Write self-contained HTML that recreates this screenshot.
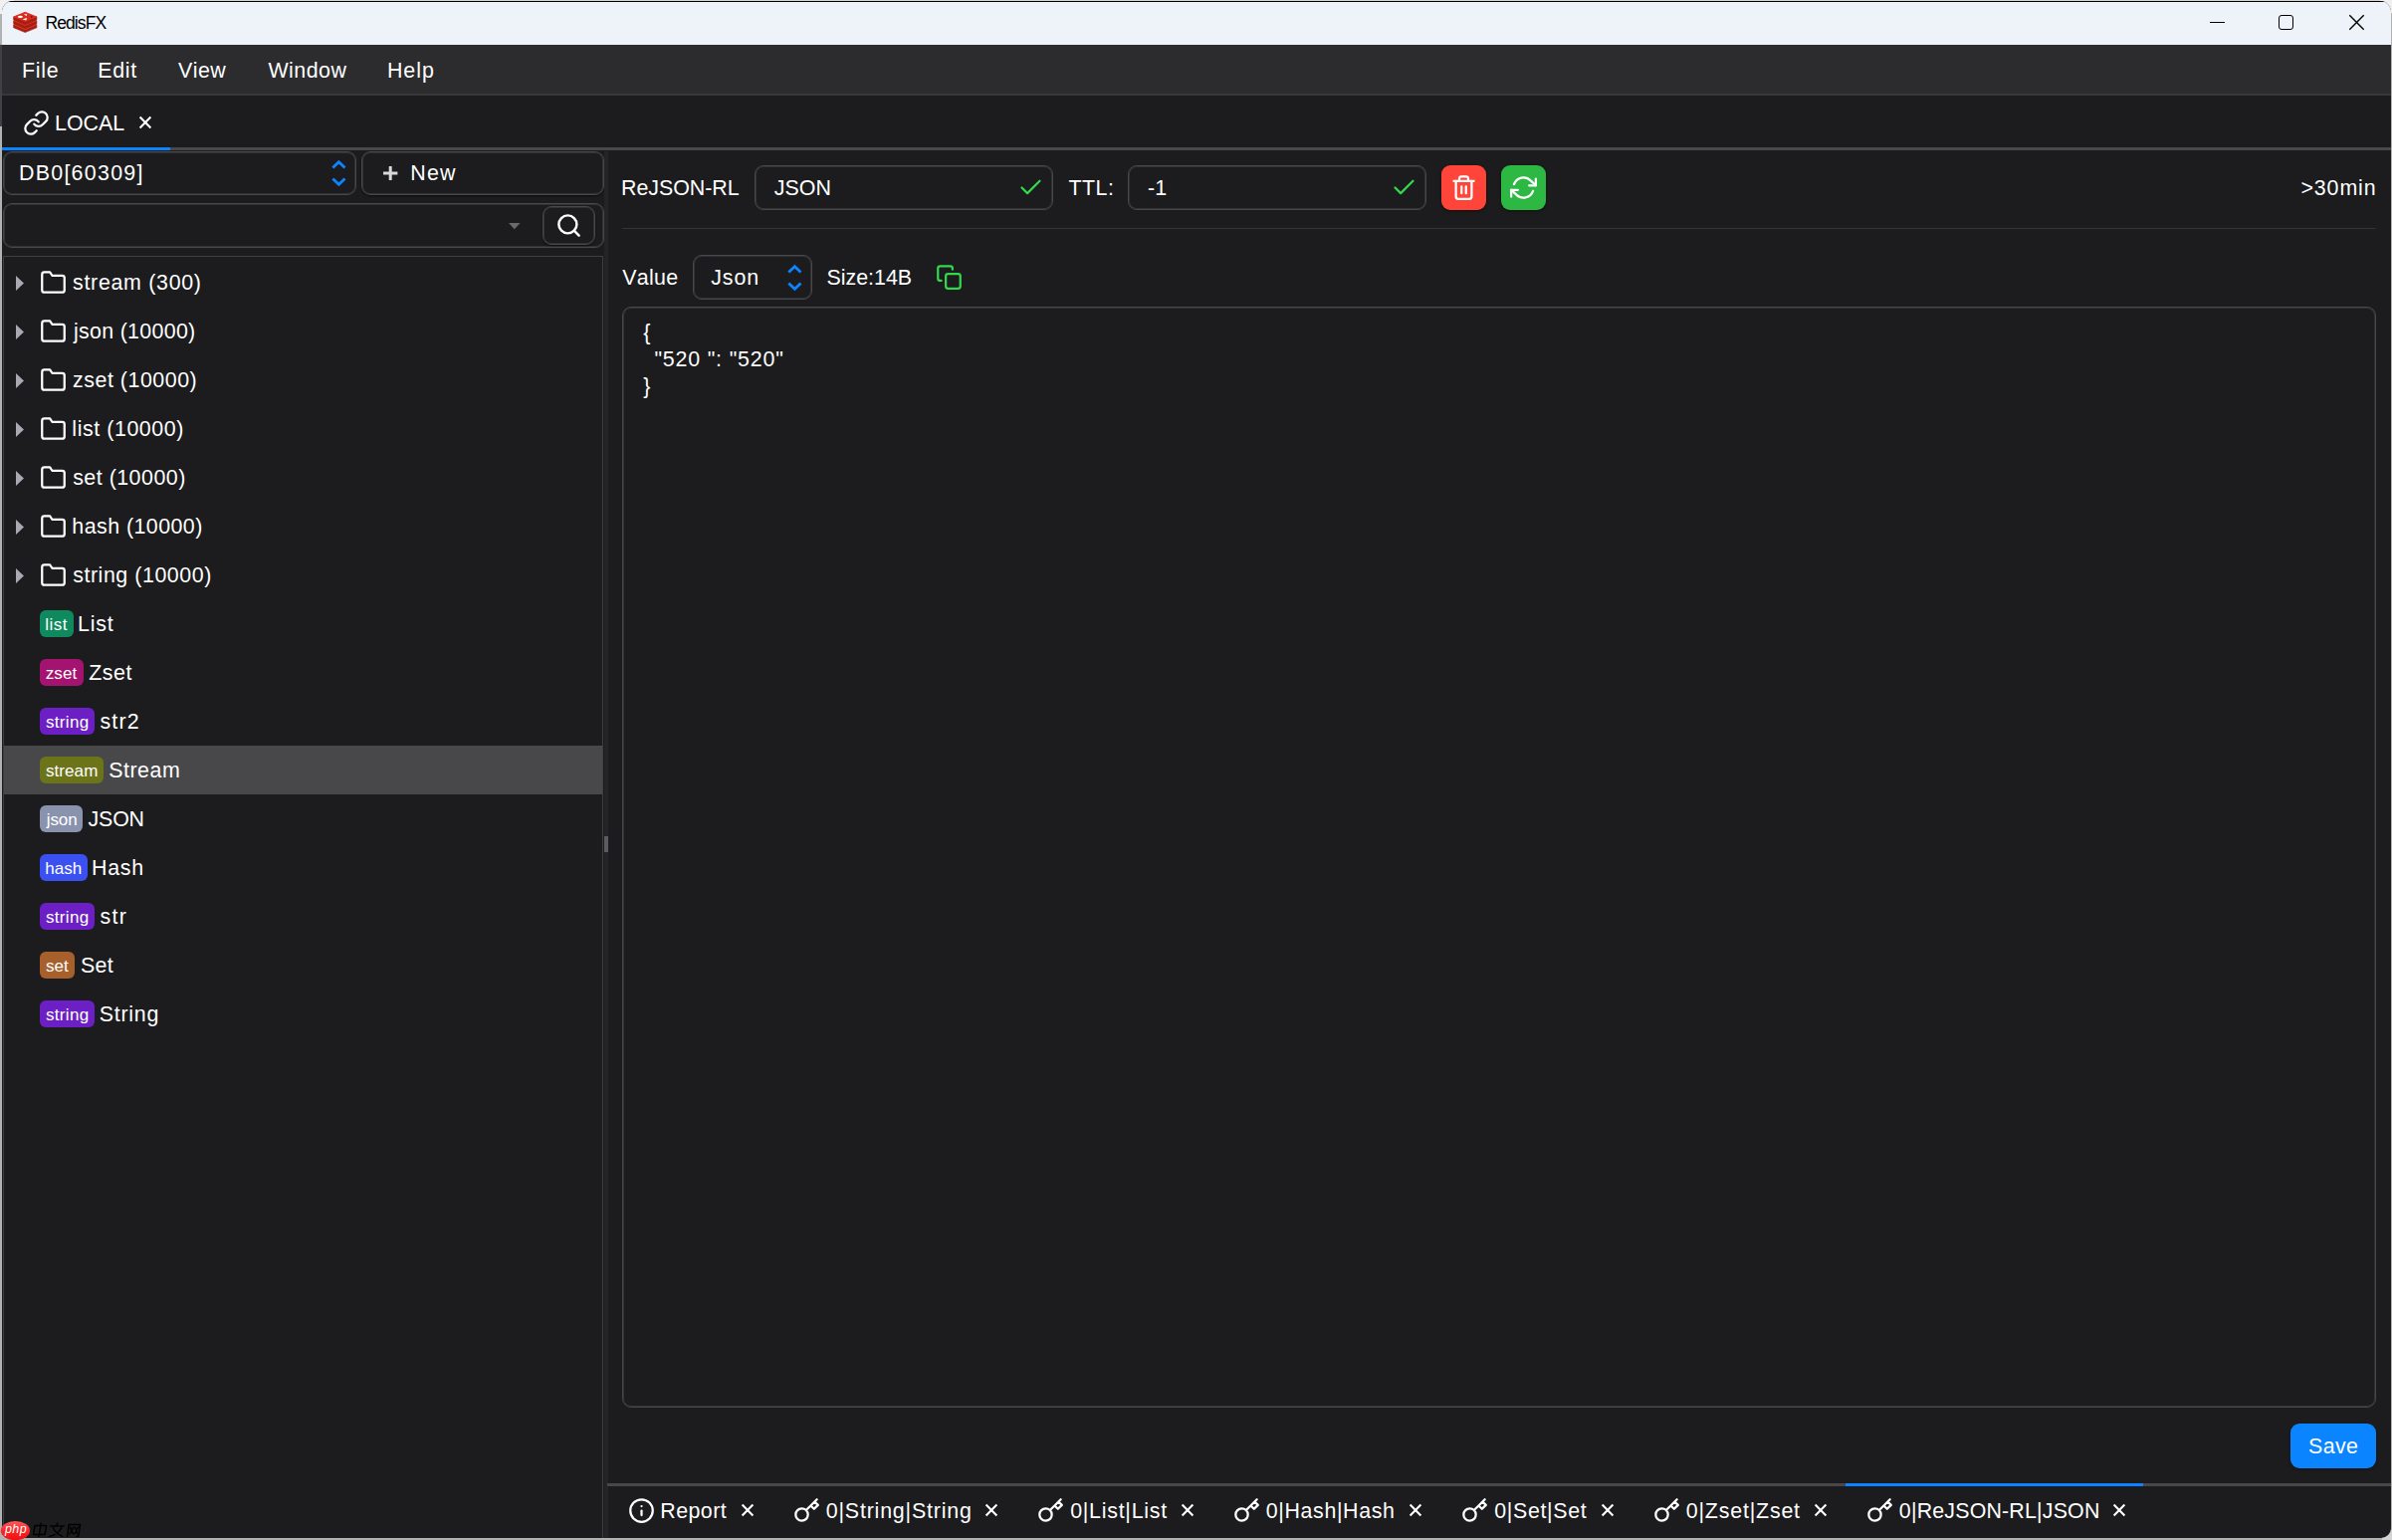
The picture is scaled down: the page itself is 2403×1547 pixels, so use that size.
<!DOCTYPE html>
<html>
<head>
<meta charset="utf-8">
<title>RedisFX</title>
<style>
html,body{margin:0;padding:0;}
body{width:2403px;height:1547px;overflow:hidden;position:relative;background:#b2b2b2;font-family:"Liberation Sans",sans-serif;font-size:22px;line-height:26px;color:#fff;}
.abs{position:absolute;}
#win{position:absolute;left:2px;top:1px;width:2400px;height:1544px;background:#1c1c1e;border-radius:11px 11px 10px 10px;overflow:hidden;}
#c{position:absolute;left:-2px;top:-1px;width:2403px;height:1547px;}
.t{position:absolute;white-space:pre;line-height:26px;height:26px;font-size:21px;font-kerning:none;}
.box{position:absolute;box-sizing:border-box;border:1px solid #48484b;border-radius:9px;background:#1c1c1e;box-shadow:inset 0 0 0 1px rgba(72,72,75,0.5);}
.badge{position:absolute;height:27px;border-radius:6px;font-size:17.5px;line-height:27px;text-align:center;white-space:pre;}
svg{position:absolute;overflow:visible;display:block;}
</style>
</head>
<body>
<div class="abs" style="left:0;top:0;width:2403px;height:1px;background:#d6d6d6;"></div>
<div class="abs" style="left:0;top:0;width:14px;height:14px;background:#f0f0f0;"></div>
<div class="abs" style="left:2391px;top:0;width:12px;height:13px;background:#f0f0f0;"></div>
<div class="abs" style="left:2393px;top:1537px;width:10px;height:10px;background:#d4d4d4;"></div>
<div class="abs" style="left:0;top:45px;width:2px;height:82px;background:#3f4146;"></div>
<div id="win"><div id="c">
<div class="abs" style="left:2px;top:1px;width:2400px;height:1px;background:#000"></div>
<div class="abs" style="left:2px;top:2px;width:2400px;height:43px;background:#eef2f9"></div>
<svg style="left:13px;top:11px" width="25" height="23" viewBox="13 11 25 23">
<g transform="translate(0,8)"><path d="M13.6 16.8L25.25 21.8L36.9 16.8V19.8L25.25 24.6L13.6 19.8Z" fill="#a41e11" stroke="#a41e11" stroke-width="0.6" stroke-linejoin="round"/><path d="M13.9 16.8L25.25 12.2L36.6 16.8L25.25 21.7Z" fill="#d82c20" stroke="#d82c20" stroke-width="0.8" stroke-linejoin="round"/></g><g transform="translate(0,4)"><path d="M13.6 16.8L25.25 21.8L36.9 16.8V19.8L25.25 24.6L13.6 19.8Z" fill="#a41e11" stroke="#a41e11" stroke-width="0.6" stroke-linejoin="round"/><path d="M13.9 16.8L25.25 12.2L36.6 16.8L25.25 21.7Z" fill="#d82c20" stroke="#d82c20" stroke-width="0.8" stroke-linejoin="round"/></g><g><path d="M13.6 16.8L25.25 21.8L36.9 16.8V19.8L25.25 24.6L13.6 19.8Z" fill="#a41e11" stroke="#a41e11" stroke-width="0.6" stroke-linejoin="round"/><path d="M13.9 16.8L25.25 12.2L36.6 16.8L25.25 21.7Z" fill="#d82c20" stroke="#d82c20" stroke-width="0.8" stroke-linejoin="round"/></g>
<ellipse cx="20.4" cy="16.9" rx="2.5" ry="1.1" fill="#fff"/><path d="M23.9 14.2L27.3 14L26.6 16.2Z" fill="#fbe4e2"/><path d="M22.6 19.3L27.1 18.1L26.3 20.6Z" fill="#fff"/><circle cx="31.7" cy="16.8" r="0.9" fill="#7a1109"/>
</svg>
<div class="t" style="left:45.4px;top:12px;font-size:17.5px;color:#000;letter-spacing:-0.9px;line-height:22px;height:22px">RedisFX</div>
<div class="abs" style="left:2220px;top:21.8px;width:15px;height:1.4px;background:#000"></div>
<div class="abs" style="left:2289px;top:15px;width:15px;height:15px;box-sizing:border-box;border:1.5px solid #000;border-radius:3px"></div>
<svg style="left:2360px;top:15px" width="15" height="15" viewBox="0 0 15 15" stroke="#000" stroke-width="1.4"><path d="M0.3 0.3L14.7 14.7M14.7 0.3L0.3 14.7"/></svg>
<div class="abs" style="left:2px;top:45px;width:2400px;height:50px;background:#2c2c2e"></div>
<div class="abs" style="left:2px;top:94px;width:2400px;height:2px;background:#38383a"></div>
<div class="t" style="left:21.94px;top:57.75px;font-size:21.4px;letter-spacing:0.71px;">File</div>
<div class="t" style="left:98.24px;top:57.75px;font-size:21.4px;letter-spacing:0.68px;">Edit</div>
<div class="t" style="left:178.91px;top:57.75px;font-size:21.4px;letter-spacing:0.49px;">View</div>
<div class="t" style="left:269.41px;top:57.75px;font-size:21.4px;letter-spacing:0.49px;">Window</div>
<div class="t" style="left:388.94px;top:57.75px;font-size:21.4px;letter-spacing:0.98px;">Help</div>
<div class="abs" style="left:2px;top:148px;width:2400px;height:3px;background:#48484a"></div>
<div class="abs" style="left:2px;top:148px;width:169px;height:3px;background:#0a84ff"></div>
<svg style="left:22.5px;top:110px" width="27" height="27" viewBox="0 0 24 24" fill="none" stroke="#fff" stroke-width="2" stroke-linecap="round" stroke-linejoin="round" ><path d="M10 13a5 5 0 0 0 7.54.54l3-3a5 5 0 0 0-7.07-7.07l-1.72 1.71"/><path d="M14 11a5 5 0 0 0-7.54-.54l-3 3a5 5 0 0 0 7.07 7.07l1.71-1.71"/></svg>
<div class="t" style="left:55.04px;top:110.95px;font-size:21.4px;letter-spacing:-0.03px;">LOCAL</div>
<svg style="left:140px;top:117px" width="12" height="12" viewBox="0 0 12 12" stroke="#fff" stroke-width="2.1" stroke-linecap="butt"><path d="M0.6 0.6L11.4 11.4M11.4 0.6L0.6 11.4"/></svg>
<div class="box" style="left:3px;top:152px;width:355px;height:44px"></div>
<div class="t" style="left:18.94px;top:160.95px;font-size:21.4px;letter-spacing:1.28px;">DB0[60309]</div>
<svg style="left:332.5px;top:161px" width="15" height="26" viewBox="0 0 15 26" fill="none" stroke="#0a84ff" stroke-width="2.8" stroke-linecap="butt" stroke-linejoin="miter"><path d="M1.3 7.6L7.4 1.7L13.5 7.6"/><path d="M1.3 18.4L7.4 24.3L13.5 18.4"/></svg>
<div class="box" style="left:363px;top:152px;width:244px;height:44px;box-shadow:inset 0 0 0 1px rgba(72,72,75,0.5),0 1px 2px rgba(0,0,0,.6)"></div>
<svg style="left:385px;top:167px" width="14" height="14" viewBox="0 0 14 14" stroke="#d9d9d9" stroke-width="3"><path d="M7.2 0V14M0 7H14.4"/></svg>
<div class="t" style="left:412.24px;top:160.95px;font-size:21.4px;letter-spacing:1.20px;">New</div>
<div class="box" style="left:3px;top:204px;width:604px;height:45px"></div>
<svg style="left:510.5px;top:223.5px" width="12" height="7" viewBox="0 0 12 7"><path d="M0 0H11.6L5.8 6.3Z" fill="#6a6a6c"/></svg>
<div class="box" style="left:545px;top:207px;width:53px;height:39px;box-shadow:inset 0 0 0 1px rgba(72,72,75,0.5),0 1px 2px rgba(0,0,0,.6)"></div>
<svg style="left:558px;top:213px" width="27" height="27" viewBox="0 0 24 24" fill="none" stroke="#fff" stroke-width="2.2" stroke-linecap="round" stroke-linejoin="round" ><circle cx="11" cy="11" r="8"/><line x1="21" y1="21" x2="16.65" y2="16.65"/></svg>
<div class="abs" style="left:3px;top:257px;width:603px;height:1292px;box-sizing:border-box;border:1px solid #3f3f42;"></div>
<svg style="left:16px;top:277.0px" width="8" height="15" viewBox="0 0 8 15"><path d="M0 0L8 7.5L0 15Z" fill="#a9a9b1"/></svg>
<svg style="left:40px;top:269.8px" width="27" height="27" viewBox="0 0 24 24" fill="none" stroke="#fff" stroke-width="2" stroke-linecap="round" stroke-linejoin="round" ><path d="M22 19a2 2 0 0 1-2 2H4a2 2 0 0 1-2-2V5a2 2 0 0 1 2-2h5l2 3h9a2 2 0 0 1 2 2z"/></svg>
<div class="t" style="left:73.10px;top:270.95px;font-size:21.4px;letter-spacing:0.69px;">stream (300)</div>
<svg style="left:16px;top:326.0px" width="8" height="15" viewBox="0 0 8 15"><path d="M0 0L8 7.5L0 15Z" fill="#a9a9b1"/></svg>
<svg style="left:40px;top:318.8px" width="27" height="27" viewBox="0 0 24 24" fill="none" stroke="#fff" stroke-width="2" stroke-linecap="round" stroke-linejoin="round" ><path d="M22 19a2 2 0 0 1-2 2H4a2 2 0 0 1-2-2V5a2 2 0 0 1 2-2h5l2 3h9a2 2 0 0 1 2 2z"/></svg>
<div class="t" style="left:73.92px;top:319.95px;font-size:21.4px;letter-spacing:0.31px;">json (10000)</div>
<svg style="left:16px;top:375.0px" width="8" height="15" viewBox="0 0 8 15"><path d="M0 0L8 7.5L0 15Z" fill="#a9a9b1"/></svg>
<svg style="left:40px;top:367.8px" width="27" height="27" viewBox="0 0 24 24" fill="none" stroke="#fff" stroke-width="2" stroke-linecap="round" stroke-linejoin="round" ><path d="M22 19a2 2 0 0 1-2 2H4a2 2 0 0 1-2-2V5a2 2 0 0 1 2-2h5l2 3h9a2 2 0 0 1 2 2z"/></svg>
<div class="t" style="left:73.03px;top:368.95px;font-size:21.4px;letter-spacing:0.53px;">zset (10000)</div>
<svg style="left:16px;top:424.0px" width="8" height="15" viewBox="0 0 8 15"><path d="M0 0L8 7.5L0 15Z" fill="#a9a9b1"/></svg>
<svg style="left:40px;top:416.8px" width="27" height="27" viewBox="0 0 24 24" fill="none" stroke="#fff" stroke-width="2" stroke-linecap="round" stroke-linejoin="round" ><path d="M22 19a2 2 0 0 1-2 2H4a2 2 0 0 1-2-2V5a2 2 0 0 1 2-2h5l2 3h9a2 2 0 0 1 2 2z"/></svg>
<div class="t" style="left:72.36px;top:417.95px;font-size:21.4px;letter-spacing:0.56px;">list (10000)</div>
<svg style="left:16px;top:473.0px" width="8" height="15" viewBox="0 0 8 15"><path d="M0 0L8 7.5L0 15Z" fill="#a9a9b1"/></svg>
<svg style="left:40px;top:465.8px" width="27" height="27" viewBox="0 0 24 24" fill="none" stroke="#fff" stroke-width="2" stroke-linecap="round" stroke-linejoin="round" ><path d="M22 19a2 2 0 0 1-2 2H4a2 2 0 0 1-2-2V5a2 2 0 0 1 2-2h5l2 3h9a2 2 0 0 1 2 2z"/></svg>
<div class="t" style="left:73.20px;top:466.95px;font-size:21.4px;letter-spacing:0.49px;">set (10000)</div>
<svg style="left:16px;top:522.0px" width="8" height="15" viewBox="0 0 8 15"><path d="M0 0L8 7.5L0 15Z" fill="#a9a9b1"/></svg>
<svg style="left:40px;top:514.8px" width="27" height="27" viewBox="0 0 24 24" fill="none" stroke="#fff" stroke-width="2" stroke-linecap="round" stroke-linejoin="round" ><path d="M22 19a2 2 0 0 1-2 2H4a2 2 0 0 1-2-2V5a2 2 0 0 1 2-2h5l2 3h9a2 2 0 0 1 2 2z"/></svg>
<div class="t" style="left:72.32px;top:515.95px;font-size:21.4px;letter-spacing:0.45px;">hash (10000)</div>
<svg style="left:16px;top:571.0px" width="8" height="15" viewBox="0 0 8 15"><path d="M0 0L8 7.5L0 15Z" fill="#a9a9b1"/></svg>
<svg style="left:40px;top:563.8px" width="27" height="27" viewBox="0 0 24 24" fill="none" stroke="#fff" stroke-width="2" stroke-linecap="round" stroke-linejoin="round" ><path d="M22 19a2 2 0 0 1-2 2H4a2 2 0 0 1-2-2V5a2 2 0 0 1 2-2h5l2 3h9a2 2 0 0 1 2 2z"/></svg>
<div class="t" style="left:73.20px;top:564.95px;font-size:21.4px;letter-spacing:0.55px;">string (10000)</div>
<div class="abs" style="left:40px;top:613.0px;width:33.5px;height:27px;border-radius:6px;background:#0f8a5f"></div>
<div class="t" style="left:45.25px;top:615.16px;font-size:17px;letter-spacing:0.50px;">list</div>
<div class="t" style="left:78.04px;top:613.95px;font-size:21.4px;letter-spacing:0.77px;">List</div>
<div class="abs" style="left:40px;top:662.0px;width:43.5px;height:27px;border-radius:6px;background:#a3136f"></div>
<div class="t" style="left:45.71px;top:664.16px;font-size:17px;letter-spacing:0.15px;">zset</div>
<div class="t" style="left:89.32px;top:662.95px;font-size:21.4px;letter-spacing:0.47px;">Zset</div>
<div class="abs" style="left:40px;top:711.0px;width:54.5px;height:27px;border-radius:6px;background:#6b1fc4"></div>
<div class="t" style="left:45.93px;top:713.16px;font-size:17px;letter-spacing:0.34px;">string</div>
<div class="t" style="left:100.40px;top:711.95px;font-size:21.4px;letter-spacing:1.23px;">str2</div>
<div class="abs" style="left:4px;top:749px;width:601px;height:49px;background:#48484a"></div>
<div class="abs" style="left:40px;top:760.0px;width:64.0px;height:27px;border-radius:6px;background:#6c741a"></div>
<div class="t" style="left:45.93px;top:762.16px;font-size:17px;letter-spacing:0.09px;">stream</div>
<div class="t" style="left:109.23px;top:760.95px;font-size:21.4px;letter-spacing:0.52px;">Stream</div>
<div class="abs" style="left:40px;top:809.0px;width:42.5px;height:27px;border-radius:6px;background:#8a93ad"></div>
<div class="t" style="left:46.82px;top:811.16px;font-size:17px;letter-spacing:-0.13px;">json</div>
<div class="t" style="left:88.57px;top:809.95px;font-size:21.4px;letter-spacing:-0.20px;">JSON</div>
<div class="abs" style="left:40px;top:858.0px;width:48.0px;height:27px;border-radius:6px;background:#3a50f0"></div>
<div class="t" style="left:45.22px;top:860.16px;font-size:17px;letter-spacing:0.04px;">hash</div>
<div class="t" style="left:92.04px;top:858.95px;font-size:21.4px;letter-spacing:0.73px;">Hash</div>
<div class="abs" style="left:40px;top:907.0px;width:54.5px;height:27px;border-radius:6px;background:#6b1fc4"></div>
<div class="t" style="left:45.93px;top:909.16px;font-size:17px;letter-spacing:0.34px;">string</div>
<div class="t" style="left:100.40px;top:907.95px;font-size:21.4px;letter-spacing:1.34px;">str</div>
<div class="abs" style="left:40px;top:956.0px;width:35.0px;height:27px;border-radius:6px;background:#a75f2c"></div>
<div class="t" style="left:45.93px;top:958.16px;font-size:17px;letter-spacing:0.11px;">set</div>
<div class="t" style="left:80.93px;top:956.95px;font-size:21.4px;letter-spacing:0.30px;">Set</div>
<div class="abs" style="left:40px;top:1005.0px;width:54.5px;height:27px;border-radius:6px;background:#6b1fc4"></div>
<div class="t" style="left:45.93px;top:1007.16px;font-size:17px;letter-spacing:0.34px;">string</div>
<div class="t" style="left:99.63px;top:1005.95px;font-size:21.4px;letter-spacing:0.79px;">String</div>
<div class="abs" style="left:607px;top:152px;width:4px;height:1395px;background:#242426"></div>
<div class="abs" style="left:607px;top:840px;width:4px;height:16px;background:#5c5c60"></div>
<div class="t" style="left:624.04px;top:175.95px;font-size:21.4px;letter-spacing:-0.04px;">ReJSON-RL</div>
<div class="box" style="left:758px;top:166px;width:300px;height:45px"></div>
<div class="t" style="left:777.67px;top:175.95px;font-size:21.4px;letter-spacing:0.07px;">JSON</div>
<svg style="left:1021.5px;top:174.5px" width="27" height="27" viewBox="0 0 24 24" fill="none" stroke="#32d74b" stroke-width="2" stroke-linecap="round" stroke-linejoin="round" ><polyline points="20 6 9 17 4 12"/></svg>
<div class="t" style="left:1073.52px;top:175.95px;font-size:21.4px;letter-spacing:0.48px;">TTL:</div>
<div class="box" style="left:1133px;top:166px;width:300px;height:45px"></div>
<div class="t" style="left:1153.05px;top:175.95px;font-size:21.4px;letter-spacing:-0.03px;">-1</div>
<svg style="left:1396.5px;top:174.5px" width="27" height="27" viewBox="0 0 24 24" fill="none" stroke="#32d74b" stroke-width="2" stroke-linecap="round" stroke-linejoin="round" ><polyline points="20 6 9 17 4 12"/></svg>
<div class="abs" style="left:1448px;top:166px;width:45px;height:45px;border-radius:9px;background:#ff453a;box-shadow:0 1px 3px rgba(0,0,0,.5)"></div>
<svg style="left:1457px;top:174.5px" width="27" height="27" viewBox="0 0 24 24" fill="none" stroke="#fff" stroke-width="2" stroke-linecap="round" stroke-linejoin="round" ><polyline points="3 6 5 6 21 6"/><path d="M19 6v14a2 2 0 0 1-2 2H7a2 2 0 0 1-2-2V6m3 0V4a2 2 0 0 1 2-2h4a2 2 0 0 1 2 2v2"/><line x1="10" y1="11" x2="10" y2="17"/><line x1="14" y1="11" x2="14" y2="17"/></svg>
<div class="abs" style="left:1508px;top:166px;width:45px;height:45px;border-radius:9px;background:#2db843;box-shadow:0 1px 3px rgba(0,0,0,.5)"></div>
<svg style="left:1517px;top:175px" width="27" height="27" viewBox="0 0 24 24" fill="none" stroke="#fff" stroke-width="2" stroke-linecap="round" stroke-linejoin="round" ><polyline points="23 4 23 10 17 10"/><polyline points="1 20 1 14 7 14"/><path d="M3.51 9a9 9 0 0 1 14.85-3.36L23 10M1 14l4.64 4.36A9 9 0 0 0 20.49 15"/></svg>
<div class="t" style="left:2311.44px;top:175.95px;font-size:21.4px;letter-spacing:0.89px;">&gt;30min</div>
<div class="abs" style="left:625px;top:229px;width:1762px;height:1px;background:#333335"></div>
<div class="t" style="left:625.31px;top:265.95px;font-size:21.4px;letter-spacing:0.30px;">Value</div>
<div class="box" style="left:696px;top:256px;width:120px;height:45px"></div>
<div class="t" style="left:714.27px;top:265.95px;font-size:21.4px;letter-spacing:0.87px;">Json</div>
<svg style="left:790.5px;top:265.5px" width="15" height="26" viewBox="0 0 15 26" fill="none" stroke="#0a84ff" stroke-width="2.8" stroke-linecap="butt" stroke-linejoin="miter"><path d="M1.3 7.6L7.4 1.7L13.5 7.6"/><path d="M1.3 18.4L7.4 24.3L13.5 18.4"/></svg>
<div class="t" style="left:830.53px;top:265.95px;font-size:21.4px;letter-spacing:-0.01px;">Size:14B</div>
<svg style="left:940px;top:264.5px" width="27" height="27" viewBox="0 0 24 24" fill="none" stroke="#32d74b" stroke-width="2" stroke-linecap="round" stroke-linejoin="round" ><rect x="9" y="9" width="13" height="13" rx="2" ry="2"/><path d="M5 15H4a2 2 0 0 1-2-2V4a2 2 0 0 1 2-2h9a2 2 0 0 1 2 2v1"/></svg>
<div class="box" style="left:625px;top:308px;width:1762px;height:1106px;"></div>
<div class="t" style="left:646.24px;top:321.45px;font-size:21.4px;">{</div>
<div class="t" style="left:657.39px;top:347.95px;font-size:21.4px;letter-spacing:0.82px;">&quot;520 &quot;: &quot;520&quot;</div>
<div class="t" style="left:646.24px;top:375.45px;font-size:21.4px;">}</div>
<div class="abs" style="left:2301px;top:1430px;width:86px;height:45px;border-radius:9px;background:#0a84ff;box-shadow:0 1px 3px rgba(0,0,0,.5)"></div>
<div class="t" style="left:2319.03px;top:1439.95px;font-size:21.4px;letter-spacing:0.38px;">Save</div>
<div class="abs" style="left:610px;top:1490px;width:1792px;height:3px;background:#48484a"></div>
<div class="abs" style="left:1854px;top:1490px;width:299px;height:3px;background:#0a84ff"></div>
<svg style="left:630.5px;top:1503.5px" width="27" height="27" viewBox="0 0 24 24" fill="none" stroke="#fff" stroke-width="2" stroke-linecap="round" stroke-linejoin="round" ><circle cx="12" cy="12" r="10"/><line x1="12" y1="16" x2="12" y2="12"/><line x1="12" y1="8" x2="12.01" y2="8"/></svg>
<div class="t" style="left:663.24px;top:1505.45px;font-size:21.4px;letter-spacing:0.46px;">Report</div>
<svg style="left:745px;top:1511px" width="12" height="12" viewBox="0 0 12 12" stroke="#fff" stroke-width="2.1" stroke-linecap="butt"><path d="M0.6 0.6L11.4 11.4M11.4 0.6L0.6 11.4"/></svg>
<svg style="left:796.5px;top:1503.5px" width="27" height="27" viewBox="0 0 24 24" fill="none" stroke="#fff" stroke-width="2" stroke-linecap="round" stroke-linejoin="round" ><path d="M21 2l-2 2m-7.61 7.61a5.5 5.5 0 1 1-7.778 7.778 5.5 5.5 0 0 1 7.777-7.777zm0 0L15.5 7.5m0 0l3 3L22 7l-3-3m-3.5 3.5L19 4"/></svg>
<div class="t" style="left:829.76px;top:1505.45px;font-size:21.4px;letter-spacing:0.81px;">0|String|String</div>
<svg style="left:990px;top:1511px" width="12" height="12" viewBox="0 0 12 12" stroke="#fff" stroke-width="2.1" stroke-linecap="butt"><path d="M0.6 0.6L11.4 11.4M11.4 0.6L0.6 11.4"/></svg>
<svg style="left:1041.5px;top:1503.5px" width="27" height="27" viewBox="0 0 24 24" fill="none" stroke="#fff" stroke-width="2" stroke-linecap="round" stroke-linejoin="round" ><path d="M21 2l-2 2m-7.61 7.61a5.5 5.5 0 1 1-7.778 7.778 5.5 5.5 0 0 1 7.777-7.777zm0 0L15.5 7.5m0 0l3 3L22 7l-3-3m-3.5 3.5L19 4"/></svg>
<div class="t" style="left:1075.16px;top:1505.45px;font-size:21.4px;letter-spacing:0.74px;">0|List|List</div>
<svg style="left:1187px;top:1511px" width="12" height="12" viewBox="0 0 12 12" stroke="#fff" stroke-width="2.1" stroke-linecap="butt"><path d="M0.6 0.6L11.4 11.4M11.4 0.6L0.6 11.4"/></svg>
<svg style="left:1238.5px;top:1503.5px" width="27" height="27" viewBox="0 0 24 24" fill="none" stroke="#fff" stroke-width="2" stroke-linecap="round" stroke-linejoin="round" ><path d="M21 2l-2 2m-7.61 7.61a5.5 5.5 0 1 1-7.778 7.778 5.5 5.5 0 0 1 7.777-7.777zm0 0L15.5 7.5m0 0l3 3L22 7l-3-3m-3.5 3.5L19 4"/></svg>
<div class="t" style="left:1271.76px;top:1505.45px;font-size:21.4px;letter-spacing:0.63px;">0|Hash|Hash</div>
<svg style="left:1416px;top:1511px" width="12" height="12" viewBox="0 0 12 12" stroke="#fff" stroke-width="2.1" stroke-linecap="butt"><path d="M0.6 0.6L11.4 11.4M11.4 0.6L0.6 11.4"/></svg>
<svg style="left:1467.5px;top:1503.5px" width="27" height="27" viewBox="0 0 24 24" fill="none" stroke="#fff" stroke-width="2" stroke-linecap="round" stroke-linejoin="round" ><path d="M21 2l-2 2m-7.61 7.61a5.5 5.5 0 1 1-7.778 7.778 5.5 5.5 0 0 1 7.777-7.777zm0 0L15.5 7.5m0 0l3 3L22 7l-3-3m-3.5 3.5L19 4"/></svg>
<div class="t" style="left:1501.16px;top:1505.45px;font-size:21.4px;letter-spacing:0.67px;">0|Set|Set</div>
<svg style="left:1609px;top:1511px" width="12" height="12" viewBox="0 0 12 12" stroke="#fff" stroke-width="2.1" stroke-linecap="butt"><path d="M0.6 0.6L11.4 11.4M11.4 0.6L0.6 11.4"/></svg>
<svg style="left:1660.5px;top:1503.5px" width="27" height="27" viewBox="0 0 24 24" fill="none" stroke="#fff" stroke-width="2" stroke-linecap="round" stroke-linejoin="round" ><path d="M21 2l-2 2m-7.61 7.61a5.5 5.5 0 1 1-7.778 7.778 5.5 5.5 0 0 1 7.777-7.777zm0 0L15.5 7.5m0 0l3 3L22 7l-3-3m-3.5 3.5L19 4"/></svg>
<div class="t" style="left:1693.76px;top:1505.45px;font-size:21.4px;letter-spacing:0.81px;">0|Zset|Zset</div>
<svg style="left:1823px;top:1511px" width="12" height="12" viewBox="0 0 12 12" stroke="#fff" stroke-width="2.1" stroke-linecap="butt"><path d="M0.6 0.6L11.4 11.4M11.4 0.6L0.6 11.4"/></svg>
<svg style="left:1874.5px;top:1503.5px" width="27" height="27" viewBox="0 0 24 24" fill="none" stroke="#fff" stroke-width="2" stroke-linecap="round" stroke-linejoin="round" ><path d="M21 2l-2 2m-7.61 7.61a5.5 5.5 0 1 1-7.778 7.778 5.5 5.5 0 0 1 7.777-7.777zm0 0L15.5 7.5m0 0l3 3L22 7l-3-3m-3.5 3.5L19 4"/></svg>
<div class="t" style="left:1907.86px;top:1505.45px;font-size:21.4px;letter-spacing:0.17px;">0|ReJSON-RL|JSON</div>
<svg style="left:2123px;top:1511px" width="12" height="12" viewBox="0 0 12 12" stroke="#fff" stroke-width="2.1" stroke-linecap="butt"><path d="M0.6 0.6L11.4 11.4M11.4 0.6L0.6 11.4"/></svg>
</div></div>
<svg style="left:0;top:1526px" width="90" height="21" viewBox="0 1526 90 21"><defs><linearGradient id="pg" x1="0" y1="0" x2="0" y2="1"><stop offset="0" stop-color="#ff5a5a"/><stop offset="0.5" stop-color="#f82828"/><stop offset="1" stop-color="#ec1212"/></linearGradient></defs><ellipse cx="15.4" cy="1537.6" rx="14.6" ry="9.6" fill="url(#pg)"/><g fill="none" stroke="#000" stroke-width="1.5" stroke-linecap="round" stroke-linejoin="round" opacity="0.92"><path d="M35 1532.6H46.6L45 1541.4H33.6ZM41.2 1530.2L39 1543.4"/><path d="M57.6 1530.2L57.2 1532.4M50.6 1533H64.4M53.4 1534.6C55 1539 58.6 1541.8 62.6 1543.4M61.8 1534.6C59.6 1539 55.4 1542 49.4 1543.6"/><path d="M67.6 1543.6L69.2 1531.4H80.6L79 1542.4Q78.8 1543.6 77 1543.4M70.6 1534.4L73.4 1540.6M74 1534L70 1541M75.4 1534.4L77.8 1540.6M78.6 1534L74.8 1541"/></g></svg>
<div class="t" style="left:5px;top:1526px;font-size:12.5px;font-style:italic;letter-spacing:0.4px;line-height:20px;height:20px;color:#fff">php</div>
</body>
</html>
